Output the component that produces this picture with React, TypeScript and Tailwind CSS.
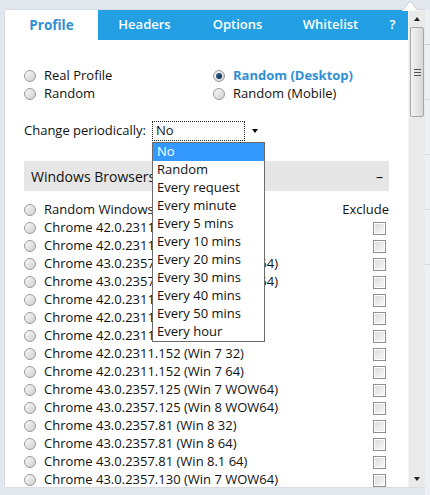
import React from "react";

const rows = [
    "Random Windows Browser",
    "Chrome 42.0.2311.135 (Win 7 32)",
    "Chrome 42.0.2311.135 (Win 7 64)",
    "Chrome 43.0.2357.124 (Win 7 WOW64)",
    "Chrome 43.0.2357.124 (Win 8 WOW64)",
    "Chrome 42.0.2311.135 (Win 8 32)",
    "Chrome 42.0.2311.135 (Win 8 64)",
    "Chrome 42.0.2311.135 (Win 10 64)",
    "Chrome 42.0.2311.152 (Win 7 32)",
    "Chrome 42.0.2311.152 (Win 7 64)",
    "Chrome 43.0.2357.125 (Win 7 WOW64)",
    "Chrome 43.0.2357.125 (Win 8 WOW64)",
    "Chrome 43.0.2357.81 (Win 8 32)",
    "Chrome 43.0.2357.81 (Win 8 64)",
    "Chrome 43.0.2357.81 (Win 8.1 64)",
    "Chrome 43.0.2357.130 (Win 7 WOW64)",
];

const periods = [
    "No",
    "Random",
    "Every request",
    "Every minute",
    "Every 5 mins",
    "Every 10 mins",
    "Every 20 mins",
    "Every 30 mins",
    "Every 40 mins",
    "Every 50 mins",
    "Every hour",
];

function Radio({ checked = false }: { checked?: boolean }) {
    return (
        <span className="w-[12px] h-[12px] shrink-0 rounded-full border border-[#9a9a9a] bg-gradient-to-br from-[#fafafa] to-[#cfcfcf] flex items-center justify-center">
            {checked && <span className="w-[6px] h-[6px] rounded-full bg-gradient-to-br from-[#3b6fa0] to-[#0d2a4a]" />}
        </span>
    );
}

function Checkbox() {
    return (
        <span className="w-[13px] h-[13px] shrink-0 border border-[#8f8f8f] bg-white p-[1px] flex">
            <span className="flex-1 bg-gradient-to-br from-[#dcdcdc] to-[#f7f7f7]" />
        </span>
    );
}

export default function App() {
    return (
        <div className="w-[430px] h-[495px] bg-[#e2e8ee] relative overflow-hidden flex pt-[10px] pl-[5px] font-['Open_Sans',sans-serif] text-[13px] text-[#111]">
            {/* popup */}
            <div className="w-[420px] h-[477px] bg-white flex shadow-[0_0_2px_rgba(0,0,0,0.15)]">
                <div className="w-[403px] flex flex-col overflow-hidden">
                    {/* tabs */}
                    <div className="h-[30px] flex shrink-0">
                        <div className="w-[93px] flex items-center justify-center text-[13.5px] font-bold text-[#2f8fd5]">Profile</div>
                        <div className="flex-1 bg-[#23a0e3] flex text-white text-[13px] font-semibold">
                            <div className="w-[93px] flex items-center justify-center">Headers</div>
                            <div className="w-[93px] flex items-center justify-center">Options</div>
                            <div className="w-[93px] flex items-center justify-center">Whitelist</div>
                            <div className="flex-1 flex items-center justify-center">?</div>
                        </div>
                    </div>

                    <div className="px-[19px] pt-[27px]">
                        {/* profile type */}
                        <div className="grid grid-cols-[189px_1fr]">
                            <label className="h-[18px] flex items-center gap-[8px]"><Radio />Real Profile</label>
                            <label className="h-[18px] flex items-center gap-[8px] font-bold text-[#2f8fd5]"><Radio checked />Random (Desktop)</label>
                            <label className="h-[18px] flex items-center gap-[8px]"><Radio />Random</label>
                            <label className="h-[18px] flex items-center gap-[8px]"><Radio />Random (Mobile)</label>
                        </div>

                        {/* change periodically */}
                        <div className="mt-[18px] h-[20px] flex items-center">
                            <span className="w-[128px] shrink-0">Change periodically:</span>
                            <div className="relative w-[113px] h-[20px] flex">
                                <div className="w-[93px] border border-dotted border-[#222] flex items-center pl-[3px]">No</div>
                                <div className="flex-1 flex items-center justify-center">
                                    <span className="w-0 h-0 border-x-[3.5px] border-x-transparent border-t-[4px] border-t-black" />
                                </div>
                                <ul className="absolute left-0 top-[21px] w-[113px] bg-white border border-[#6b6b6b] z-10">
                                    {periods.map((p, i) => (
                                        <li key={p} className={`h-[18px] flex items-center pl-[4px] ${i === 0 ? "bg-[#3399ff] text-white" : ""}`}>{p}</li>
                                    ))}
                                </ul>
                            </div>
                        </div>

                        {/* windows browsers */}
                        <div className="mt-[20px] h-[30px] bg-[#e6e6e6] flex items-center justify-between pl-[7px] pr-[6px] text-[14px]">
                            <span>Windows Browsers</span>
                            <span>–</span>
                        </div>

                        <div className="mt-[10px] pr-[3px]">
                            {rows.map((r, i) => (
                                <div key={r} className="h-[18px] flex items-center">
                                    <Radio />
                                    <span className="ml-[8px] flex-1 whitespace-nowrap">{r}</span>
                                    {i === 0 ? <span className="-mr-[3px]">Exclude</span> : <Checkbox />}
                                </div>
                            ))}
                        </div>
                    </div>
                </div>

                {/* scrollbar */}
                <div className="w-[17px] bg-[#eaeaea] border-l border-[#f4f4f4] flex flex-col">
                    <div className="h-[17px] flex items-center justify-center">
                        <span className="w-0 h-0 border-x-[3.5px] border-x-transparent border-b-[4px] border-b-[#222]" />
                    </div>
                    <div className="mx-[1px] h-[90px] rounded-[2px] border border-[#a8a8a8] bg-gradient-to-r from-[#f2f2f2] to-[#d8d8d8] flex flex-col items-center justify-center gap-[2px]">
                        <span className="w-[7px] h-px bg-[#555]" />
                        <span className="w-[7px] h-px bg-[#555]" />
                        <span className="w-[7px] h-px bg-[#555]" />
                    </div>
                    <div className="flex-1" />
                    <div className="h-[17px] flex items-center justify-center">
                        <span className="w-0 h-0 border-x-[3.5px] border-x-transparent border-t-[4px] border-t-[#222]" />
                    </div>
                </div>
            </div>

            {/* page behind, right edge */}
            <div className="flex-1 flex flex-col bg-[#eef1f4]">
                <div className="h-[35px] border-b border-[#c9d0d8]" />
                <div className="h-[55px] border-b border-[#d5dbe2]" />
                <div className="h-[55px] border-b border-[#d5dbe2]" />
                <div className="h-[55px] border-b border-[#d5dbe2]" />
                <div className="h-[55px] border-b border-[#d5dbe2]" />
            </div>

            {/* bubble notch */}
            <svg className="absolute left-[402px] top-0" width="16" height="11" viewBox="0 0 16 11">
                <path d="M0 11 L8 1 L16 11 Z" fill="#ffffff" stroke="#c8ced6" strokeWidth="1" />
                <rect x="0" y="10" width="16" height="1" fill="#ffffff" />
            </svg>
        </div>
    );
}
